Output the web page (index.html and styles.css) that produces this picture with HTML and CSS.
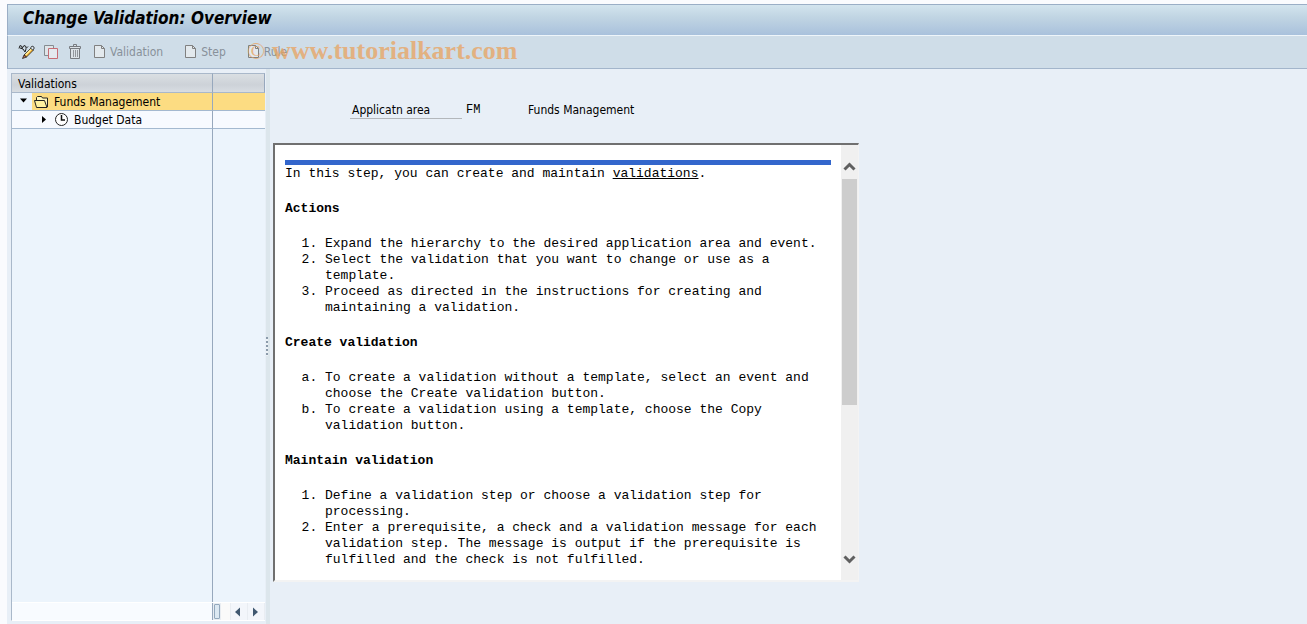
FILE: index.html
```html
<!DOCTYPE html>
<html lang="en">
<head>
<meta charset="utf-8">
<title>Change Validation: Overview</title>
<link rel="stylesheet" href="styles.css">
</head>
<body>
<div class="window">
  <header class="title-bar"><h1>Change Validation: Overview</h1></header>
  <div class="toolbar" role="toolbar">
    <button class="tool" type="button" aria-label="Display or change">
      <svg width="17" height="16" viewBox="0 0 17 16"><path d="M1 4.500l1-3 2 1v2l2-3 2 1v2l2-2M2 4l3 1 2 3 1-3" fill="none" stroke="#222"/><path d="M6 11l7-7 2.500 2-7 7z" fill="#f5b030" stroke="#222" stroke-width=".8"/><path d="M7.500 11l6-6" stroke="#fff0a0" stroke-width="1.200"/><path d="M12.500 4l1.500-2 2 1v2l-1.500 1z" fill="#dce8f0" stroke="#222" stroke-width=".8"/><path d="M6 11l2.500 2-4 1.500z" fill="#c46a48" stroke="#222" stroke-width=".8"/></svg>
    </button>
    <button class="tool" type="button" aria-label="Copy">
      <svg width="16" height="16" viewBox="0 0 16 16"><path d="M1.500 1.500h9v10h-9z" fill="#dfe5e9" stroke="#858b90"/><path d="M5.500 4.500h9v10h-9z" fill="#e4e9ef" stroke="#c76c74"/></svg>
    </button>
    <button class="tool" type="button" aria-label="Delete">
      <svg width="16" height="16" viewBox="0 0 16 16"><path d="M2.500 2.500h11v2h-11zM6.500 2.500v-2h3v2M3.500 4.500v10h9v-10" fill="#dce2e7" stroke="#777b80"/><path d="M6.500 6v7M8.500 6v7M10.500 6v7" stroke="#93979c"/></svg>
    </button>
    <button class="tool create" type="button" disabled><svg width="16" height="16" viewBox="0 0 16 16"><path d="M3.500 1.500h7l3 3v9h-10z" fill="#e3e9ed" stroke="#808080"/><path d="M10.500 1.500v3h3" fill="none" stroke="#808080"/></svg>Validation</button>
    <button class="tool create" type="button" disabled><svg width="16" height="16" viewBox="0 0 16 16"><path d="M3.500 1.500h7l3 3v9h-10z" fill="#e3e9ed" stroke="#808080"/><path d="M10.500 1.500v3h3" fill="none" stroke="#808080"/></svg>Step</button>
    <button class="tool create" type="button" disabled><svg width="16" height="16" viewBox="0 0 16 16"><path d="M3.500 1.500h7l3 3v9h-10z" fill="#e3e9ed" stroke="#808080"/><path d="M10.500 1.500v3h3" fill="none" stroke="#808080"/></svg>Rule</button>
    <div class="watermark"><span class="copyright">©</span>www.tutorialkart.com</div>
  </div>
  <div class="workspace">
    <aside class="tree">
      <table class="tree-table">
        <thead><tr><th class="name">Validations</th><th></th></tr></thead>
        <tbody>
          <tr class="selected">
            <td class="name"><div class="node">
              <svg class="twisty" width="20" height="16" viewBox="0 0 20 16"><path d="M8 5h7l-3.500 4z" fill="#000"/></svg>
              <svg width="18" height="16" viewBox="0 0 18 16"><path d="M4.500 6V3.500l1-1h4l1 1.500h5v9" fill="#fff6bd" stroke="#222"/><path d="M2.500 6.500h10l2.500 7H4.500z" fill="#fff1a0" stroke="#222"/></svg>
              <span>Funds Management</span></div></td>
            <td></td>
          </tr>
          <tr>
            <td class="name"><div class="node child">
              <svg width="14" height="16" viewBox="0 0 14 16"><path d="M3 4v7l4-3.500z" fill="#000"/></svg>
              <svg width="15" height="16" viewBox="0 0 15 16"><circle cx="7.500" cy="7.500" r="6" fill="#fff" stroke="#222"/><path d="M7.500 3v5H11" fill="none" stroke="#111" stroke-width="1.500"/></svg>
              <span>Budget Data</span></div></td>
            <td></td>
          </tr>
        </tbody>
      </table>
      <div class="tree-space"><div></div></div>
      <div class="tree-foot">
        <div class="scroll-x">
          <span class="thumb-x"></span>
          <button type="button" aria-label="Scroll left"><svg width="15" height="16" viewBox="0 0 15 16"><path d="M9 3.500v9L4 8z" fill="#405870"/></svg></button>
          <button type="button" aria-label="Scroll right"><svg width="15" height="16" viewBox="0 0 15 16"><path d="M5 3.500v9L10 8z" fill="#405870"/></svg></button>
        </div>
      </div>
    </aside>
    <div class="splitter"><span class="grip"></span></div>
    <main class="detail">
      <div class="area">
        <span class="area-label">Applicatn area</span>
        <span class="area-code">FM</span>
        <span>Funds Management</span>
      </div>
      <section class="help">
        <article class="doc">
          <hr>
          <p>In this step, you can create and maintain <a href="#">validations</a>.</p>
          <h2>Actions</h2>
          <ol>
            <li>Expand the hierarchy to the desired application area and event.</li>
            <li>Select the validation that you want to change or use as a<br>template.</li>
            <li>Proceed as directed in the instructions for creating and<br>maintaining a validation.</li>
          </ol>
          <h2>Create validation</h2>
          <ol type="a">
            <li>To create a validation without a template, select an event and<br>choose the Create validation button.</li>
            <li>To create a validation using a template, choose the Copy<br>validation button.</li>
          </ol>
          <h2>Maintain validation</h2>
          <ol>
            <li>Define a validation step or choose a validation step for<br>processing.</li>
            <li>Enter a prerequisite, a check and a validation message for each<br>validation step. The message is output if the prerequisite is<br>fulfilled and the check is not fulfilled.</li>
          </ol>
        </article>
        <div class="scroll-y">
          <button type="button" aria-label="Scroll up"><svg width="17" height="16" viewBox="0 0 17 16"><path d="M3.500 10.500l5-5 5 5" fill="none" stroke="#606060" stroke-width="3"/></svg></button>
          <div class="track-y"><span class="thumb-y"></span></div>
          <button type="button" aria-label="Scroll down"><svg width="17" height="16" viewBox="0 0 17 16"><path d="M3.500 5.500l5 5 5-5" fill="none" stroke="#606060" stroke-width="3"/></svg></button>
        </div>
      </section>
    </main>
  </div>
</div>
</body>
</html>
```
FILE: styles.css
```css
* { box-sizing: border-box; }
body {
  margin: 0;
  background: #fafbfe;
  color: #000;
  font: 12px/16px "DejaVu Sans Condensed", "Noto Sans", sans-serif;
}
button { border: 0; padding: 0; background: none; font: inherit; color: inherit; }
svg { display: block; flex: none; }
.window {
  display: flex;
  flex-direction: column;
  height: 100vh;
  padding: 4px 0 0 7px;
}
.title-bar {
  flex: none;
  height: 32px;
  padding: 3px 15px;
  border-top: 1px solid #9aaec6;
  border-left: 1px solid #9aaec6;
  border-bottom: 1px solid #eef5fa;
  background: linear-gradient(#d3e4ee, #c1d5e3 40%, #a9c1dc);
}
h1 { margin: 0; font-size: 17px; line-height: 20px; font-style: italic; font-weight: bold; }
.toolbar {
  position: relative;
  flex: none;
  display: flex;
  align-items: center;
  gap: 8px;
  height: 33px;
  padding: 0 10px;
  border-left: 1px solid #9aaec6;
  border-bottom: 1px solid #a3b5cb;
  background: #cfdde8;
}
.tool { display: flex; align-items: center; gap: 3px; }
.tool svg { margin-bottom: 1px; }
.create { margin-right: 11px; color: #88919a; }
.watermark {
  position: absolute;
  left: 239px;
  top: 2px;
  display: flex;
  align-items: center;
  color: #e9a35f;
  opacity: 0.75;
  font: bold 26px/26px "Liberation Serif", serif;
}
.copyright { width: 25px; font-size: 24px; font-weight: normal; }
.workspace { flex: 1; display: flex; min-height: 0; background: #e8eff7; }
.tree {
  flex: none;
  display: flex;
  flex-direction: column;
  width: 254px;
  margin: 4px 1px 3px 4px;
  border-left: 1px solid #a9b8ca;
  border-bottom: 1px solid #fff;
  background: #ecf4fc;
}
.tree-table { width: 100%; border-collapse: separate; border-spacing: 0; table-layout: fixed; }
.tree-table th {
  height: 20px;
  padding: 1px 6px 0;
  border-top: 1px solid #a9b8ca;
  border-right: 1px solid #97a8bd;
  border-bottom: 1px solid #a9b8ca;
  background: linear-gradient(#dadfe3, #cdd2d8 60%, #d8dde2);
  text-align: left;
  font-weight: normal;
}
.tree-table .name { width: 201px; border-right: 1px solid #97a8bd; }
.tree-table td { height: 18px; padding: 0; border-bottom: 1px solid #a4b9d0; background: #f7faff; }
.tree-table .selected td { background: #fcdc82; }
.node { display: flex; align-items: center; height: 17px; }
.node span { padding: 1px 0 0 4px; line-height: 16px; }
.selected .twisty { height: 17px; background: #ecf4fc; }
.child { gap: 1px; padding-left: 27px; }
.tree-space { flex: 1; }
.tree-space div { width: 201px; height: 100%; border-right: 1px solid #97a8bd; }
.tree-foot {
  display: flex;
  height: 18px;
  padding-left: 200px;
  border-top: 1px solid #fff;
  background: #f8fbff;
}
.scroll-x {
  flex: 1;
  display: flex;
  gap: 1px;
  border-left: 1px solid #97a8bd;
  border-right: 1px solid #e9edf2;
  background: #e9edf2;
}
.thumb-x { width: 6px; margin: 1px 0 1px 1px; border: 1px solid #93a8bd; border-radius: 1px; background: #dce8f2; }
.scroll-x::before { content: ""; order: 1; flex: 1; background: #fafafa; }
.scroll-x button { order: 2; width: 16px; background: #f3f6fb; }
.splitter { flex: none; display: flex; align-items: center; width: 4px; background: #dce6ec; }
.grip { width: 2px; height: 19px; background: repeating-linear-gradient(#8b9bab 0 2px, #edf2f6 2px 4px); }
.detail { flex: 1; min-width: 0; padding: 33px 3px 0; }
.area { display: flex; height: 17px; padding-left: 77px; }
.area-label { width: 112px; height: 17px; padding-left: 2px; border-bottom: 1px solid #b3b7bb; }
.area-code { width: 66px; padding-left: 4px; font-family: "Liberation Mono", monospace; }
.help {
  display: flex;
  width: 586px;
  max-width: 100%;
  margin-top: 24px;
  border: 2px solid #707070;
  border-right: 1px solid #f3f3f3;
  border-bottom-color: #f3f3f3;
  background: #fff;
}
.doc {
  flex: 1;
  min-width: 0;
  padding: 15px 10px 12px;
  font: 13px/16px "Liberation Mono", monospace;
}
.doc hr { height: 5px; margin: 0 0 1px; border: 0; background: #3366cc; }
.doc p { margin: 0; }
.doc h2 { margin: 19px 0; font: inherit; font-weight: bold; }
.doc ol { margin: 0; padding-left: 40px; }
.doc a { color: inherit; }
.scroll-y { flex: none; display: flex; flex-direction: column; width: 17px; padding: 13px 0; background: #f0f0f0; }
.scroll-y button { flex: none; height: 17px; }
.track-y { flex: 1; padding: 4px 1px 0; }
.thumb-y { display: block; height: 61%; background: #cdcdcd; }
```
